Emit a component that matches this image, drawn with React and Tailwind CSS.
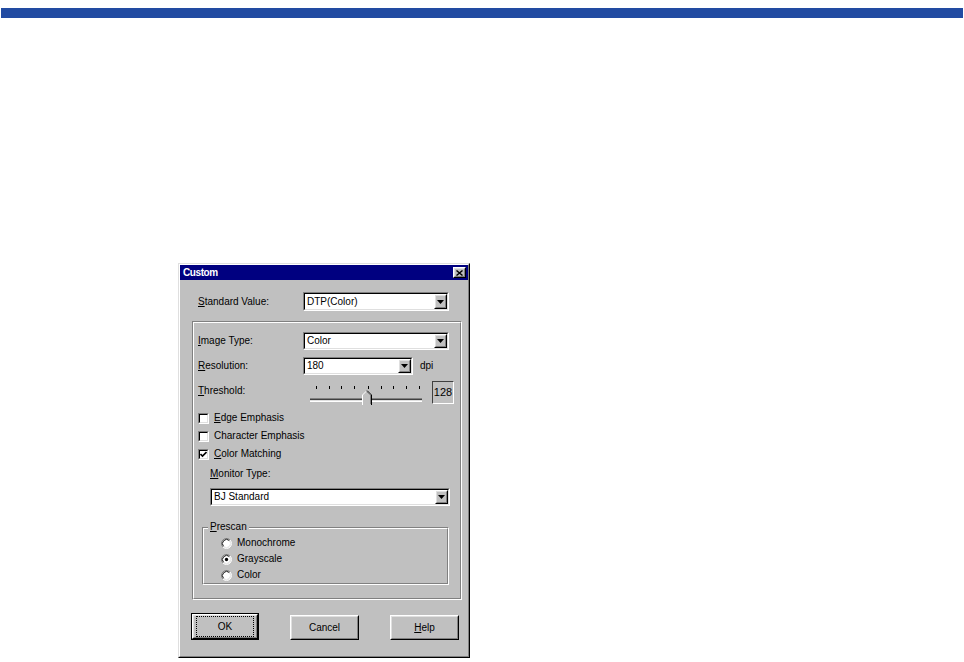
import React from 'react';

const raisedOuter = 'border border-t-white border-l-white border-r-black border-b-black';
const raisedInner = 'border border-t-[#dfdfdf] border-l-[#dfdfdf] border-r-[#808080] border-b-[#808080]';
const sunkenOuter = 'border border-t-[#808080] border-l-[#808080] border-r-white border-b-white';
const sunkenInner = 'border border-t-black border-l-black border-r-[#dfdfdf] border-b-[#dfdfdf]';
const etchedOuter = 'border border-t-[#808080] border-l-[#808080] border-r-white border-b-white';
const etchedInner = 'border border-t-white border-l-white border-r-[#808080] border-b-[#808080]';

const DownArrow = () => (
    <svg width="7" height="4" viewBox="0 0 7 4">
        <polygon points="0,0 7,0 3.5,4" fill="black" />
    </svg>
);

const ArrowButton = () => (
    <div className={`h-full w-[13px] ${raisedOuter}`}>
        <div className={`flex h-full items-center justify-center bg-[#c0c0c0] ${raisedInner}`}>
            <DownArrow />
        </div>
    </div>
);

const Combo = ({ value, className }) => (
    <div className={`flex ${sunkenOuter} ${className}`}>
        <div className={`flex flex-1 items-stretch bg-white ${sunkenInner}`}>
            <span className="flex flex-1 items-center pl-[2px] text-[10px] leading-none">{value}</span>
            <ArrowButton />
        </div>
    </div>
);

const Checkbox = ({ checked }) => (
    <div className={`h-[11px] w-[11px] ${sunkenOuter}`}>
        <div className={`flex h-full items-center justify-center bg-white ${sunkenInner}`}>
            {checked && (
                <svg width="7" height="7" viewBox="0 0 7 7">
                    <polyline points="0.5,3 2.5,5 6.5,1" fill="none" stroke="black" strokeWidth="1.6" />
                </svg>
            )}
        </div>
    </div>
);

const Radio = ({ checked }) => (
    <svg width="11" height="11" viewBox="0 0 12 12">
        <circle cx="6" cy="6" r="5" fill="white" />
        <path d="M2.11 9.89 A5.5 5.5 0 0 1 9.89 2.11" fill="none" stroke="#808080" strokeWidth="1" />
        <path d="M9.89 2.11 A5.5 5.5 0 0 1 2.11 9.89" fill="none" stroke="white" strokeWidth="1" />
        <path d="M2.82 9.18 A4.5 4.5 0 0 1 9.18 2.82" fill="none" stroke="black" strokeWidth="1" />
        <path d="M9.18 2.82 A4.5 4.5 0 0 1 2.82 9.18" fill="none" stroke="#dfdfdf" strokeWidth="1" />
        {checked && <circle cx="6" cy="6" r="1.8" fill="black" />}
    </svg>
);

const Slider = () => {
    const ticks = [13, 26, 38, 51, 65, 78, 90, 103, 116];
    return (
        <svg width="125" height="25" viewBox="0 0 125 25">
            {ticks.map(x => (
                <rect key={x} x={x} y="5" width="1" height="3" fill="black" />
            ))}
            <rect x="7" y="17" width="112" height="1" fill="#808080" />
            <rect x="7" y="18" width="112" height="1" fill="#404040" />
            <rect x="7" y="19" width="112" height="1" fill="#dfdfdf" />
            <rect x="7" y="20" width="112" height="1" fill="white" />
            <polygon points="59,14 64,9 69,14 69,24 59,24" fill="#c0c0c0" />
            <polyline points="59.5,24 59.5,14 64,9.5" fill="none" stroke="white" strokeWidth="1" />
            <polyline points="64,9.5 68.5,14 68.5,24" fill="none" stroke="black" strokeWidth="1" />
            <polyline points="63.5,10.5 67.5,14 67.5,23" fill="none" stroke="#808080" strokeWidth="1" />
        </svg>
    );
};

const Button = ({ children, isDefault, className }) => (
    <div className={`${isDefault ? 'h-[27px] w-[68px] border border-black' : 'h-[25px] w-[69px]'} ${className || ''}`}>
        <div className={`h-full ${raisedOuter}`}>
            <div className={`flex h-full items-center justify-center bg-[#c0c0c0] ${raisedInner}`}>
                {isDefault ? (
                    <div className="flex h-full w-full items-center justify-center border border-dotted border-black m-[2px] text-[10px] leading-none">
                        {children}
                    </div>
                ) : (
                    <span className="text-[10px] leading-none">{children}</span>
                )}
            </div>
        </div>
    </div>
);

const CustomDialog = () => (
    <div className="ml-[178px] mt-[245px] h-[395px] w-[292px] border border-t-[#dfdfdf] border-l-[#dfdfdf] border-r-black border-b-black">
        <div className="flex h-full flex-col border border-t-white border-l-white border-r-[#808080] border-b-[#808080] bg-[#c0c0c0]">
            <div className="flex h-[15px] items-center justify-between bg-[#000080] pl-[3px] pr-[2px]">
                <span className="text-[10px] font-bold leading-none tracking-[-0.4px] text-white">Custom</span>
                <div className={`h-[11px] w-[13px] ${raisedOuter}`}>
                    <div className={`flex h-full items-center justify-center bg-[#c0c0c0] ${raisedInner}`}>
                        <svg width="7" height="6" viewBox="0 0 7 6">
                            <path d="M0.5 0.5 L6.5 5.5 M6.5 0.5 L0.5 5.5" stroke="black" strokeWidth="1.4" />
                        </svg>
                    </div>
                </div>
            </div>

            <div className="mt-[12px] flex h-[19px] items-center pl-[18px] text-[10px] leading-none">
                <span className="w-[105px]"><u>S</u>tandard Value:</span>
                <Combo value="DTP(Color)" className="h-[19px] w-[146px]" />
            </div>

            <div className={`ml-[12px] mt-[10px] h-[279px] w-[270px] ${etchedOuter}`}>
                <div className={`flex h-full flex-col text-[10px] leading-none ${etchedInner}`}>
                    <div className="mt-[9px] flex h-[18px] items-center pl-[4px]">
                        <span className="w-[105px]"><u>I</u>mage Type:</span>
                        <Combo value="Color" className="h-[18px] w-[146px]" />
                    </div>
                    <div className="mt-[7px] flex h-[18px] items-center pl-[4px]">
                        <span className="w-[105px]"><u>R</u>esolution:</span>
                        <Combo value="180" className="h-[18px] w-[110px]" />
                        <span className="ml-[7px]">dpi</span>
                    </div>
                    <div className="mt-[6px] flex h-[24px] items-start pl-[4px]">
                        <span className="mt-[5px] w-[105px]"><u>T</u>hreshold:</span>
                        <Slider />
                        <div className="ml-[4px] flex h-[23px] w-[22px] items-center justify-center border border-t-[#404040] border-l-[#404040] border-r-white border-b-white text-[11px]">
                            128
                        </div>
                    </div>
                    <div className="mt-[4px] flex h-[18px] items-center gap-[5px] pl-[4px]">
                        <Checkbox />
                        <span><u>E</u>dge Emphasis</span>
                    </div>
                    <div className="flex h-[18px] items-center gap-[5px] pl-[4px]">
                        <Checkbox />
                        <span>Character Emphasis</span>
                    </div>
                    <div className="flex h-[18px] items-center gap-[5px] pl-[4px]">
                        <Checkbox checked />
                        <span><u>C</u>olor Matching</span>
                    </div>
                    <div className="mt-[4px] flex h-[14px] items-center pl-[16px]">
                        <span><u>M</u>onitor Type:</span>
                    </div>
                    <Combo value="BJ Standard" className="ml-[16px] mt-[7px] h-[18px] w-[240px]" />

                    <div className={`ml-[8px] mt-[21px] h-[58px] w-[247px] ${etchedOuter}`}>
                        <div className={`flex h-full flex-col ${etchedInner}`}>
                            <span className="-mt-[8px] ml-[4px] h-[12px] w-fit bg-[#c0c0c0] px-[2px] leading-[12px]">
                                <u>P</u>rescan
                            </span>
                            <div className="mt-[2px] flex flex-col pl-[17px]">
                                {[['Monochrome', false], ['Grayscale', true], ['Color', false]].map(([label, on]) => (
                                    <div key={label} className="flex h-[16px] items-center gap-[5px]">
                                        <Radio checked={on} />
                                        <span>{label}</span>
                                    </div>
                                ))}
                            </div>
                        </div>
                    </div>
                </div>
            </div>

            <div className="mt-[13px] flex items-start pl-[11px]">
                <Button isDefault>OK</Button>
                <Button className="ml-[31px] mt-[2px]">Cancel</Button>
                <Button className="ml-[31px] mt-[2px]"><u>H</u>elp</Button>
            </div>
        </div>
    </div>
);

export default function App() {
    return (
        <div className="min-h-screen bg-white pt-[8px] font-['Liberation_Sans',Arial,sans-serif] text-black">
            <div className="mx-[1px] h-[10px] bg-[#224ba2]" />
            <CustomDialog />
        </div>
    );
}
